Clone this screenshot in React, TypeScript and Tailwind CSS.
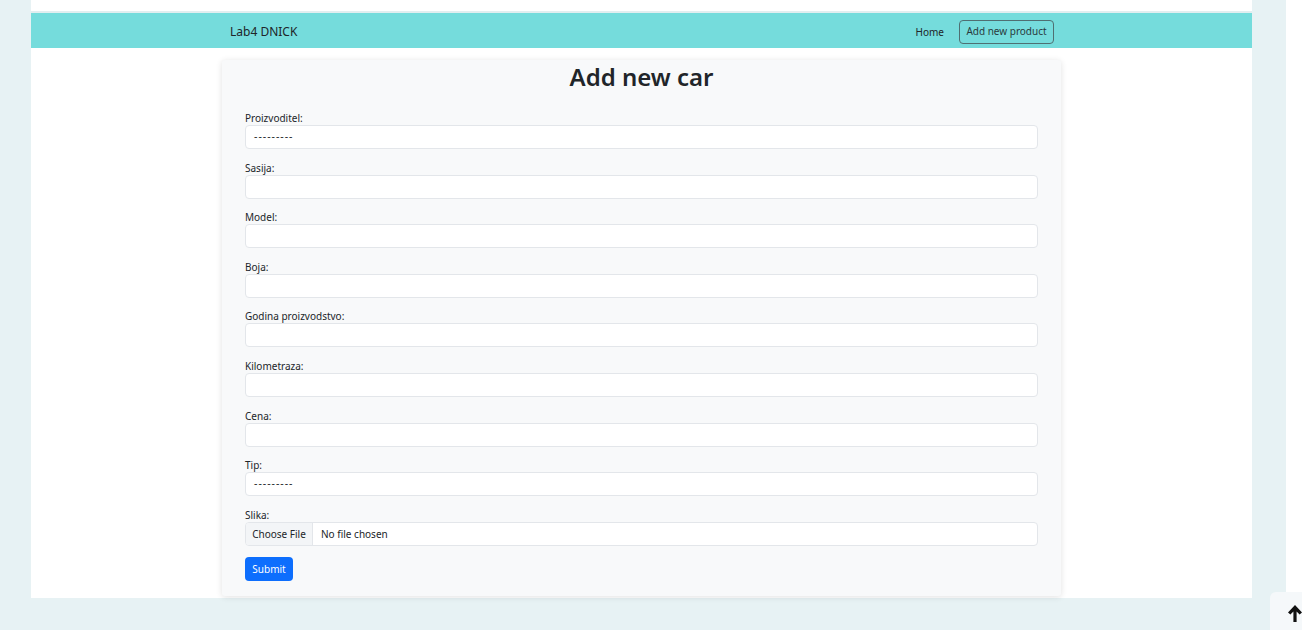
import React from "react";

const font = { fontFamily: '"Noto Sans", "Open Sans", "Liberation Sans", sans-serif' };

function Field({ label, value }: { label: string; value?: string }) {
  return (
    <div className="flex flex-col mb-[11.6px]">
      <label className="text-[10px] leading-[14px] h-[14px] text-[#212529]">{label}</label>
      <div className="h-[24px] bg-white border border-[#e3e6ea] rounded-[4px] flex items-center px-[8px] text-[10.5px] text-[#212529]">
        {value ? <span className="tracking-[1px]">{value}</span> : ""}
      </div>
    </div>
  );
}

export default function App() {
  return (
    <div className="relative w-[1302px] h-[630px] bg-[#e7f2f4] flex overflow-hidden" style={font}>
      <div className="w-[31px] shrink-0" />
      <div className="w-[1221px] h-[598px] bg-white shrink-0 flex flex-col">
        <div className="h-[11px]" />
        <div className="h-[2px] bg-[#e2eef0]" />
        <nav className="h-[35px] bg-[#75dcdc] flex items-center">
          <div className="ml-[199px] text-[12px] text-[#212529] pt-[3px]">Lab4 DNICK</div>
          <div className="flex-1" />
          <div className="text-[10px] text-[#212529] mr-[15px] pt-[3px]">Home</div>
          <div className="h-[24px] w-[95px] mt-[2px] border border-[#4f6f72] rounded-[4px] flex items-center justify-center text-[10px] text-[#2a3a3c] mr-[198px]">
            Add new product
          </div>
        </nav>
        <div className="pt-[12px] pl-[191px]">
          <div className="w-[839px] h-[536px] bg-[#f8f9fa] shadow-[0_1px_6px_rgba(0,0,0,0.12)] rounded-[3px] px-[23px] flex flex-col">
            <h1 className="text-center text-[24px] font-semibold text-[#212529] leading-[34px] mt-[0px] mb-[17px]">Add new car</h1>
            <Field label="Proizvoditel:" value="---------" />
            <Field label="Sasija:" />
            <Field label="Model:" />
            <Field label="Boja:" />
            <Field label="Godina proizvodstvo:" />
            <Field label="Kilometraza:" />
            <Field label="Cena:" />
            <Field label="Tip:" value="---------" />
            <div className="flex flex-col mb-[9px]">
              <label className="text-[10px] leading-[14px] h-[14px] text-[#212529]">Slika:</label>
              <div className="h-[24px] bg-white border border-[#e3e6ea] rounded-[4px] flex items-center text-[10px] text-[#212529] overflow-hidden">
                <div className="h-full w-[67px] bg-[#f3f5f7] border-r border-[#e3e6ea] flex items-center justify-center pt-[1px]">Choose File</div>
                <div className="pl-[8px] pt-[1px]">No file chosen</div>
              </div>
            </div>
            <div>
              <div className="inline-flex h-[24px] w-[48px] bg-[#0d6efd] rounded-[4px] items-center justify-center text-[10px] text-white">Submit</div>
            </div>
          </div>
        </div>
      </div>
      <div className="w-[34px] shrink-0" />
      <div className="w-[16px] h-[592px] bg-white shrink-0" />
      <div className="absolute left-[1270px] top-[592px] w-[40px] h-[40px] bg-[#f5f8fa] rounded-tl-[6px] flex items-start pt-[12px] pl-[17px]">
        <svg width="16" height="18" viewBox="0 0 16 18">
          <path d="M8 1 L15 8.5 L12.6 10.6 L9.6 7.4 L9.6 18 L6.4 18 L6.4 7.4 L3.4 10.6 L1 8.5 Z" fill="#111" />
        </svg>
      </div>
    </div>
  );
}
